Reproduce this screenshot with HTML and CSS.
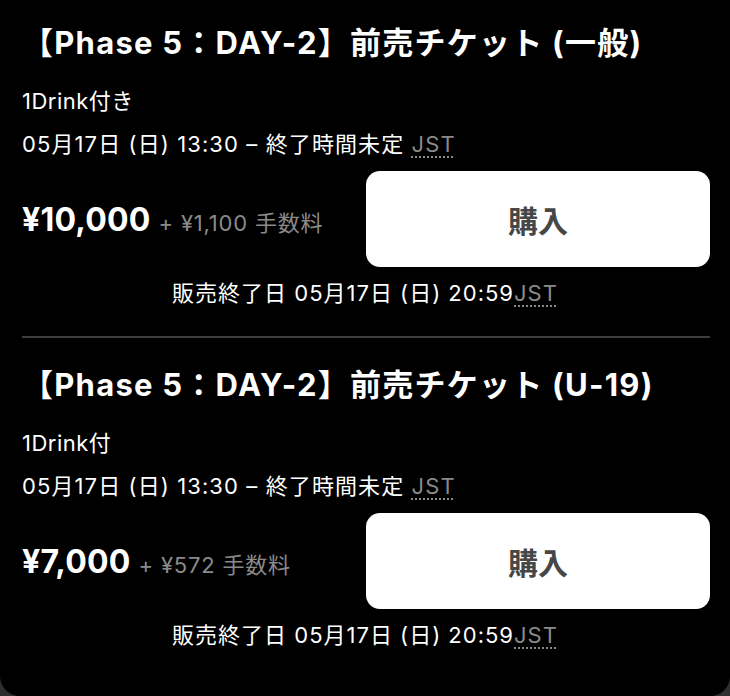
FILE: index.html
```html
<!DOCTYPE html>
<html lang="ja">
<head>
<meta charset="utf-8">
<link rel="stylesheet" href="styles.css">
</head>
<body>
<div class="card">
  <section class="ticket first">
    <h2 class="title">【Phase 5：DAY-2】前売チケット (一般)</h2>
    <p class="desc">1Drink付き</p>
    <p class="date">05月17日 (日) 13:30 – 終了時間未定 <abbr class="tz">JST</abbr></p>
    <div class="row">
      <div class="price"><span class="amount">¥10,000</span><span class="fee">+ ¥1,100 手数料</span></div>
      <button class="buy">購入</button>
    </div>
    <p class="end">販売終了日 05月17日 (日) 20:59<abbr class="tz">JST</abbr></p>
  </section>
  <hr class="divider">
  <section class="ticket second">
    <h2 class="title">【Phase 5：DAY-2】前売チケット (U-19)</h2>
    <p class="desc">1Drink付</p>
    <p class="date">05月17日 (日) 13:30 – 終了時間未定 <abbr class="tz">JST</abbr></p>
    <div class="row">
      <div class="price"><span class="amount">¥7,000</span><span class="fee">+ ¥572 手数料</span></div>
      <button class="buy">購入</button>
    </div>
    <p class="end">販売終了日 05月17日 (日) 20:59<abbr class="tz">JST</abbr></p>
  </section>
</div>
</body>
</html>
```
FILE: styles.css
```css
* { box-sizing: border-box; }
html, body { margin: 0; padding: 0; }
body {
  background: #2e2e2e;
  font-family: "Inter", "Noto Sans CJK JP", sans-serif;
  color: #fff;
}
.card {
  background: #000;
  height: 696px;
  border-radius: 0 0 20px 20px;
  padding: 0 20px 0 22px;
}
.ticket { margin: 0; }
.first { padding-top: 23px; }
.second { padding-top: 27px; }
.title {
  margin: 0;
  font-size: 31px;
  line-height: 40px;
  font-weight: 700;
  letter-spacing: 1.25px;
  white-space: nowrap;
}
.desc {
  margin: 24px 0 0;
  font-size: 22px;
  line-height: 28px;
  letter-spacing: 0.5px;
}
.date {
  margin: 15px 0 0;
  font-size: 22px;
  line-height: 28px;
  letter-spacing: 1.1px;
}
.tz {
  color: #8a8a8a;
  text-decoration: underline dotted #8a8a8a;
  text-underline-offset: 4px;
  text-decoration-thickness: 2px;
}
.row {
  margin-top: 13px;
  display: flex;
  align-items: center;
  gap: 16px;
}
.price {
  flex: 1;
  white-space: nowrap;
}
.amount {
  font-size: 32px;
  font-weight: 700;
  letter-spacing: 0.2px;
}
.fee {
  margin-left: 8px;
  font-size: 22px;
  color: #8a8a8a;
  letter-spacing: 0.8px;
}
.buy {
  width: 344px;
  height: 96px;
  border: none;
  border-radius: 14px;
  background: #fff;
  color: #474747;
  font-family: "Noto Sans CJK JP", sans-serif;
  font-size: 30px;
  font-weight: 700;
  padding: 0;
}
.end {
  margin: 12px 0 0;
  text-align: center;
  font-size: 22px;
  line-height: 28px;
  letter-spacing: 1px;
  padding-right: 2px;
}
.divider {
  margin: 29px 0 0;
  border: none;
  height: 2px;
  background: #3e3e3e;
}
```
